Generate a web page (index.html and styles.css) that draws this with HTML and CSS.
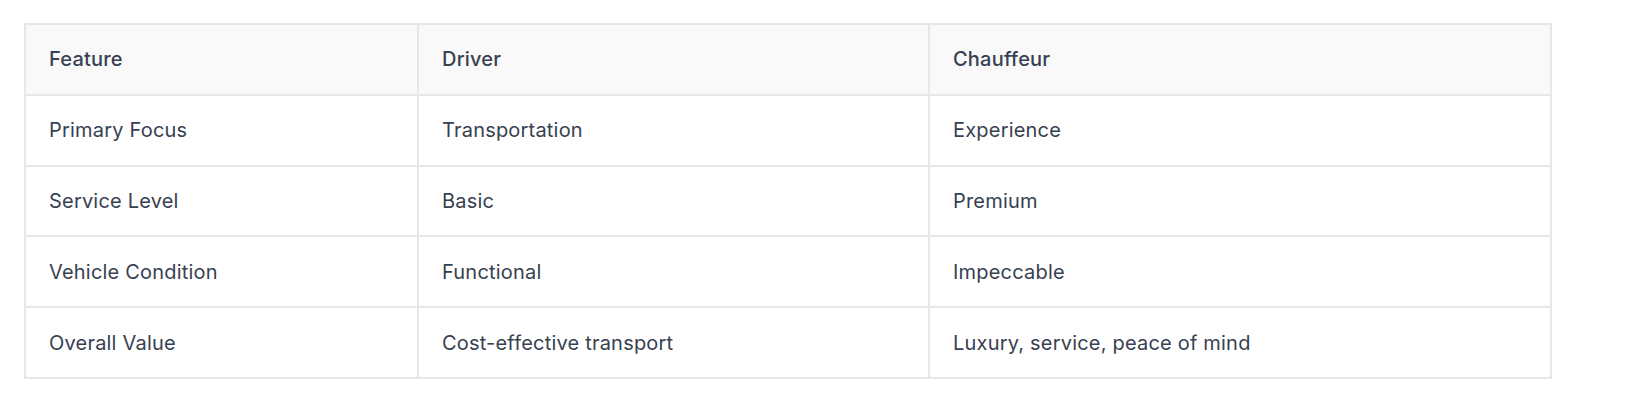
FILE: index.html
```html
<!DOCTYPE html>
<html lang="en">
<head>
<meta charset="utf-8">
<title>Driver vs Chauffeur</title>
<link rel="stylesheet" href="styles.css">
</head>
<body>
<div class="wrap">
<table class="cmp">
<colgroup><col class="c1"><col class="c2"><col class="c3"></colgroup>
<thead>
<tr><th>Feature</th><th>Driver</th><th>Chauffeur</th></tr>
</thead>
<tbody>
<tr><td>Primary Focus</td><td>Transportation</td><td>Experience</td></tr>
<tr><td>Service Level</td><td>Basic</td><td>Premium</td></tr>
<tr><td>Vehicle Condition</td><td>Functional</td><td>Impeccable</td></tr>
<tr><td>Overall Value</td><td>Cost-effective transport</td><td>Luxury, service, peace of mind</td></tr>
</tbody>
</table>
</div>
</body>
</html>
```
FILE: styles.css
```css
html, body {
  margin: 0;
  padding: 0;
  background: #ffffff;
}
.wrap {
  padding: 23px 91px 0 24px;
}
.cmp {
  width: 1526px;
  border-collapse: collapse;
  table-layout: fixed;
  font-family: Inter, "Noto Sans", sans-serif;
  font-size: 20px;
  letter-spacing: 0.2px;
  color: #374151;
}
.c1 { width: 393px; }
.c2 { width: 511px; }
.c3 { width: 622px; }
.cmp th, .cmp td {
  border: 2px solid #e6e7ea;
  padding: 19.4px 23px;
  line-height: 30px;
  text-align: left;
}
.cmp th {
  background: #f9f9f9;
  font-weight: 500;
}
.cmp td {
  font-weight: 400;
}
```
